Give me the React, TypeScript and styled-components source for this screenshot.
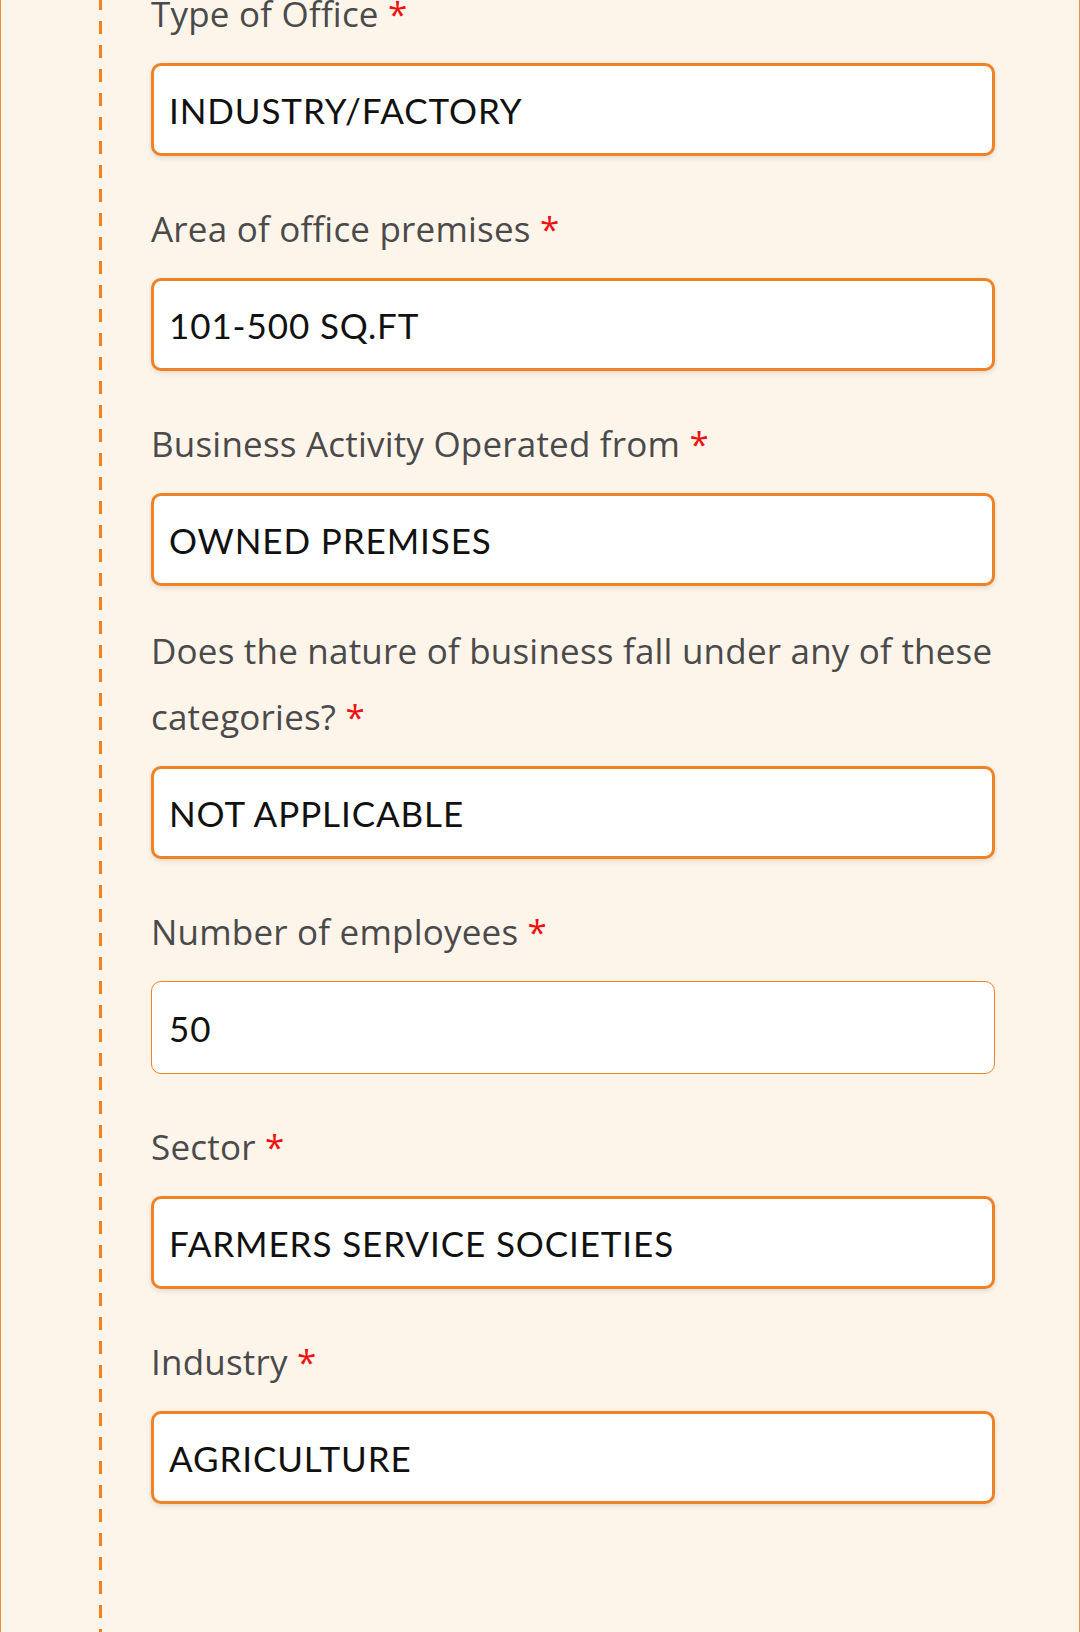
import React from "react";
import styled, { createGlobalStyle } from "styled-components";

const GlobalStyle = createGlobalStyle`
  html, body {
    margin: 0;
    padding: 0;
    background: #fef5ea;
  }
  body {
    font-family: "Open Sans", "Noto Sans", sans-serif;
  }
  * { box-sizing: border-box; }
`;

const Page = styled.div`
  display: flex;
  height: 1632px;
  overflow: hidden;
  background: #fef5ea;
  border-left: 1px solid #ec8a3c;
  border-right: 1px solid #d9975a;
`;

const Timeline = styled.div`
  flex: 0 0 3px;
  margin-left: 98px;
  background-image: repeating-linear-gradient(
    to bottom,
    #f3811f 0px,
    #f3811f 13px,
    transparent 13px,
    transparent 24px
  );
  background-position: 0 -3px;
`;

const Form = styled.div`
  display: flex;
  flex-direction: column;
  gap: 39.5px;
  width: 844px;
  margin-left: 49px;
  margin-top: -19.5px;
`;

const Field = styled.div<{ $wrapped?: boolean }>`
  display: flex;
  flex-direction: column;
  gap: 16.5px;
  margin-top: ${(p) => (p.$wrapped ? "-8px" : "0")};
`;

const Label = styled.label`
  font-family: "Open Sans", "Noto Sans", sans-serif;
  font-size: 35px;
  letter-spacing: 0.2px;
  line-height: 66px;
  color: #4a4a4a;
  font-weight: 400;
`;

const Required = styled.span`
  color: #f01010;
`;

const Input = styled.input<{ $plain?: boolean }>`
  display: block;
  width: 100%;
  height: 93px;
  padding: 0 ${(p) => (p.$plain ? "17px" : "15px")};
  border: ${(p) => (p.$plain ? "1px" : "3px")} solid #f08226;
  border-radius: 10px;
  background: #ffffff;
  box-shadow: ${(p) => (p.$plain ? "none" : "0 2px 5px rgba(0, 0, 0, 0.12)")};
  font-family: Lato, "Open Sans", sans-serif;
  font-size: 35px;
  letter-spacing: 0.9px;
  color: #111111;
  outline: none;
`;

type FieldData = {
  label: string;
  value: string;
  plain?: boolean;
  wrapped?: boolean;
};

const fields: FieldData[] = [
  { label: "Type of Office", value: "INDUSTRY/FACTORY" },
  { label: "Area of office premises", value: "101-500 SQ.FT" },
  { label: "Business Activity Operated from", value: "OWNED PREMISES" },
  {
    label: "Does the nature of business fall under any of these categories?",
    value: "NOT APPLICABLE",
    wrapped: true,
  },
  { label: "Number of employees", value: "50", plain: true },
  { label: "Sector", value: "FARMERS SERVICE SOCIETIES" },
  { label: "Industry", value: "AGRICULTURE" },
];

export default function App() {
  return (
    <>
      <GlobalStyle />
      <Page>
        <Timeline />
        <Form>
          {fields.map((f) => (
            <Field key={f.label} $wrapped={f.wrapped}>
              <Label>
                {f.label} <Required>*</Required>
              </Label>
              <Input readOnly value={f.value} $plain={f.plain} />
            </Field>
          ))}
        </Form>
      </Page>
    </>
  );
}
